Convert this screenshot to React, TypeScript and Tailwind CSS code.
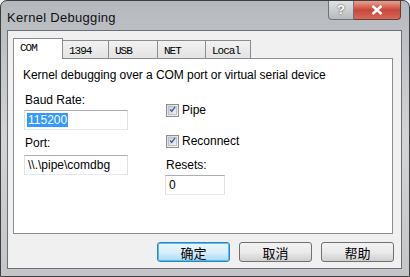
import React, { useState } from "react";

const tabs = [
  { name: "COM", w: "w-[50px]" },
  { name: "1394", w: "w-[46px]" },
  { name: "USB", w: "w-[49px]" },
  { name: "NET", w: "w-[48px]" },
  { name: "Local", w: "w-[45px]" },
];

const CheckBox: React.FC<{ checked: boolean; onClick: () => void }> = ({ checked, onClick }) => (
  <button
    onClick={onClick}
    className="w-[13px] h-[13px] border border-[#8f8f8f] bg-gradient-to-br from-[#dcdcdc] to-[#f6f6f6] flex items-center justify-center p-0"
  >
    <span className="w-[9px] h-[9px] border border-[#b9c2cc] bg-gradient-to-br from-[#c8d2dc] to-[#eef2f6] flex items-center justify-center">
      {checked && (
        <svg width="9" height="9" viewBox="0 0 9 9" className="-mt-[1px]">
          <path d="M1.5 4.5 L3.5 7 L7.8 1.2" fill="none" stroke="#4a5f97" strokeWidth="1.8" />
        </svg>
      )}
    </span>
  </button>
);

const TextBox: React.FC<{ value: string; className?: string; selected?: boolean }> = ({ value, className, selected }) => (
  <div
    className={`h-[20px] bg-white border border-t-[#abadb3] border-l-[#dbdfe6] border-r-[#dbdfe6] border-b-[#e3e9ef] flex items-center pl-[2px] text-[12px] text-black ${className ?? ""}`}
  >
    <span className={selected ? "bg-[#3399ff] text-white px-[1px] leading-[14px]" : "px-[1px]"}>{value}</span>
  </div>
);

const KernelDebugging: React.FC = () => {
  const [tab, setTab] = useState("COM");
  const [pipe, setPipe] = useState(true);
  const [reconnect, setReconnect] = useState(true);

  return (
    <div className="w-[410px] h-[277px] overflow-hidden bg-[#f0f0f0]">
      <div
        className="w-[410px] h-[277px] flex flex-col rounded-t-[7px] border border-[#3f3f3f] bg-gradient-to-b from-[#b5b9be] via-[#d2d4d6] to-[#c3c5c8]"
        style={{ fontFamily: '"Liberation Sans", Arial, sans-serif' }}
      >
        {/* title bar */}
        <div className="h-[29px] flex items-start shrink-0">
          <div className="pl-[6px] pt-[7px] text-[13px] text-[#111] tracking-[0.3px]">Kernel Debugging</div>
          <div className="ml-auto mr-[8px] flex">
            <div className="w-[26px] h-[19px] rounded-bl-[4px] border border-t-0 border-[#6f7378] bg-gradient-to-b from-[#dfe1e3] to-[#b7babe] flex items-center justify-center text-[13px] font-bold text-white [text-shadow:0_0_2px_#333]">
              ?
            </div>
            <div className="w-[47px] h-[19px] rounded-br-[4px] border border-t-0 border-l-0 border-[#6e3a30] bg-gradient-to-b from-[#e8a08f] via-[#c9463a] to-[#d5685c] flex items-center justify-center">
              <svg width="12" height="10" viewBox="0 0 12 10">
                <path d="M1.5 1 L10.5 9 M10.5 1 L1.5 9" stroke="#fff" strokeWidth="2.4" />
              </svg>
            </div>
          </div>
        </div>

        {/* client area */}
        <div className="ml-[6px] mr-[7px] mb-[7px] flex-1 bg-[#f0f0f0] border border-[#6d6f73] flex flex-col">
          <div className="pl-[5px] pt-[6px] flex items-end h-[27px] shrink-0">
            {tabs.map((t) => {
              const active = t.name === tab;
              return (
                <button
                  key={t.name}
                  onClick={() => setTab(t.name)}
                  className={`${t.w} ${
                    active
                      ? "h-[21px] bg-white border border-b-0 border-[#898c95] -mb-[1px] z-10 pt-[1px]"
                      : "h-[18px] bg-gradient-to-b from-[#f2f2f2] to-[#e3e3e3] border border-b-0 border-l-0 border-[#898c95] pt-[2px]"
                  } flex items-start pl-[6px] text-[11px] tracking-[-1px] text-black`}
                  style={{ fontFamily: '"Liberation Mono", "Courier New", monospace' }}
                >
                  {t.name}
                </button>
              );
            })}
          </div>

          <div className="ml-[5px] w-[380px] h-[176px] bg-white border border-[#898c95] shrink-0 text-[12px] text-black">
            <div className="pl-[9px] pt-[7px] tracking-[-0.05px]">Kernel debugging over a COM port or virtual serial device</div>
            <div className="flex pl-[10px] pt-[9px]">
              <div className="w-[142px] flex flex-col">
                <div className="pl-[1px] leading-[14px]">Baud Rate:</div>
                <TextBox value="115200" selected className="w-[104px] mt-[3px]" />
                <div className="pl-[1px] mt-[6px] leading-[14px]">Port:</div>
                <TextBox value="\\.\pipe\comdbg" className="w-[104px] mt-[5px]" />
              </div>
              <div className="flex flex-col">
                <div className="flex items-center gap-[3px] mt-[8px]">
                  <CheckBox checked={pipe} onClick={() => setPipe(!pipe)} />
                  <span>Pipe</span>
                </div>
                <div className="flex items-center gap-[3px] mt-[13px]">
                  <CheckBox checked={reconnect} onClick={() => setReconnect(!reconnect)} />
                  <span>Reconnect</span>
                </div>
                <div className="mt-[8px] leading-[14px]">Resets:</div>
                <TextBox value="0" className="w-[60px] -ml-[1px] mt-[3px]" />
              </div>
            </div>
          </div>

          <div className="flex justify-end gap-[9px] pr-[7px] mt-[8px] text-[13px]" style={{ fontFamily: '"Noto Sans CJK SC", sans-serif' }}>
            <button className="w-[73px] h-[20px] rounded-[3px] border border-[#3c7fb1] bg-gradient-to-b from-[#eaf6fd] via-[#d9f0fc] to-[#a7d9f5] shadow-[inset_0_0_0_1px_#48c4f6] flex items-center justify-center leading-none">
              确定
            </button>
            <button className="w-[73px] h-[20px] rounded-[3px] border border-[#707070] bg-gradient-to-b from-[#f2f2f2] via-[#ebebeb] to-[#cfcfcf] flex items-center justify-center leading-none">
              取消
            </button>
            <button className="w-[73px] h-[20px] rounded-[3px] border border-[#707070] bg-gradient-to-b from-[#f2f2f2] via-[#ebebeb] to-[#cfcfcf] flex items-center justify-center leading-none">
              帮助
            </button>
          </div>
        </div>
      </div>
    </div>
  );
};

export default KernelDebugging;
